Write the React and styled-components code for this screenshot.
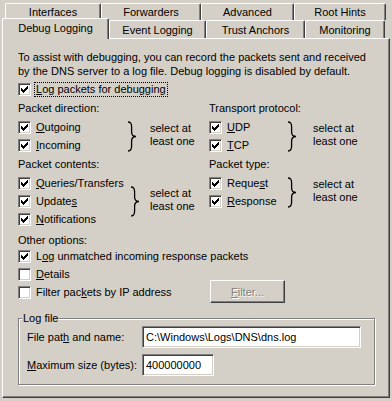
import React from 'react';
import styled, { createGlobalStyle } from 'styled-components';

const GlobalStyle = createGlobalStyle`
  html, body {
    margin: 0;
    padding: 0;
    background: #d4d0c8;
  }
  body {
    font-family: "Liberation Sans", Arial, sans-serif;
    font-size: 11px;
    color: #000;
  }
`;

const Dialog = styled.div`
  width: 392px;
  height: 401px;
  box-sizing: border-box;
  padding: 3px 2px 0 2px;
  background: #d4d0c8;
`;

const TabRow = styled.div`
  display: flex;
  height: ${p => p.h}px;
  padding-left: ${p => p.indent || 0}px;
`;

const Tab = styled.div`
  position: relative;
  width: ${p => p.w}px;
  height: ${p => (p.active ? 21 : p.h)}px;
  margin-top: ${p => (p.active ? -2 : 0)}px;
  z-index: ${p => (p.active ? 2 : 0)};
  box-sizing: border-box;
  background: #d4d0c8;
  border-left: 1px solid #fff;
  border-top: 1px solid #fff;
  border-right: 1px solid #404040;
  border-radius: 2px 2px 0 0;
  box-shadow: inset -1px 0 0 #808080;
  display: flex;
  align-items: center;
  justify-content: center;
  padding-bottom: ${p => (p.active ? 3 : 0)}px;
  white-space: nowrap;
`;

const Panel = styled.div`
  width: 388px;
  height: 360px;
  box-sizing: border-box;
  border: 1px solid;
  border-color: #fff #404040 #404040 #fff;
  box-shadow: inset -1px -1px 0 #808080;
  padding: 11px 13px 0 15px;
`;

const Intro = styled.p`
  margin: 0;
  line-height: 14px;
`;

const Heading = styled.div`
  line-height: 14px;
  margin-top: ${p => p.mt ?? 3}px;
  margin-bottom: ${p => p.mb ?? 3}px;
`;

const CheckRow = styled.div`
  display: flex;
  align-items: center;
  height: 18px;
  gap: 5px;
  margin-top: ${p => p.mt || 0}px;
`;

const Label = styled.span`
  line-height: 13px;
  white-space: nowrap;
  padding: 0 1px;
  margin-left: -1px;
  outline: ${p => (p.focused ? '1px dotted #000' : 'none')};
`;

const Key = styled.u`
  text-decoration: underline;
  text-underline-offset: 1px;
`;

const BoxFrame = styled.span`
  width: 13px;
  height: 13px;
  flex: none;
  box-sizing: border-box;
  background: #fff;
  border: 1px solid;
  border-color: #808080 #fff #fff #808080;
  box-shadow: inset 1px 1px 0 #404040, inset -1px -1px 0 #d4d0c8;
  display: flex;
  align-items: center;
  justify-content: center;
`;

// classic 7x7 check mark, one 3px column per x
const checkPath = [2, 3, 4, 3, 2, 1, 0]
  .map((r, c) => `M${c} ${r}h1v3h-1z`)
  .join(' ');

function CheckBox({ checked }) {
  return (
    <BoxFrame>
      {checked && (
        <svg width="7" height="7" viewBox="0 0 7 7" shapeRendering="crispEdges">
          <path d={checkPath} fill="#000" />
        </svg>
      )}
    </BoxFrame>
  );
}

function Option({ checked, children, focused, mt }) {
  return (
    <CheckRow mt={mt}>
      <CheckBox checked={checked} />
      <Label focused={focused}>{children}</Label>
    </CheckRow>
  );
}

const Columns = styled.div`
  display: grid;
  grid-template-columns: 191px 1fr;
`;

const Choice = styled.div`
  display: flex;
  align-items: center;
`;

const ChoiceList = styled.div`
  width: ${p => p.w}px;
  flex: none;
  display: flex;
  flex-direction: column;
`;

const Brace = styled.svg`
  flex: none;
  margin-right: ${p => p.gap}px;
`;

const Hint = styled.div`
  line-height: 13px;
  margin-top: -3px;
`;

function SelectGroup({ w, gap, children }) {
  return (
    <Choice>
      <ChoiceList w={w}>{children}</ChoiceList>
      <Brace width="10" height="31" viewBox="0 0 10 31" gap={gap}>
        <path
          d="M1 1 C4 1 4.6 3 4.6 6 L4.6 11 C4.6 14 6 15.5 9 15.5 C6 15.5 4.6 17 4.6 20 L4.6 25 C4.6 28 4 30 1 30"
          fill="none"
          stroke="#000"
          strokeWidth="1.3"
        />
      </Brace>
      <Hint>
        select at
        <br />
        least one
      </Hint>
    </Choice>
  );
}

const FilterRow = styled.div`
  display: grid;
  grid-template-columns: 191px 1fr;
  grid-template-rows: 18px;
  align-items: center;
`;

const Button = styled.button`
  width: 75px;
  height: 23px;
  margin: -3px 0 -2px 1px;
  box-sizing: border-box;
  background: #d4d0c8;
  border: 1px solid;
  border-color: #fff #404040 #404040 #fff;
  box-shadow: inset -1px -1px 0 #808080;
  font: inherit;
  color: #808080;
  text-shadow: 1px 1px 0 #fff;
  padding: 0;
`;

const GroupBox = styled.div`
  position: relative;
  margin-top: 17px;
  width: 357px;
  height: 67px;
  box-sizing: border-box;
  border: 1px solid #808080;
  box-shadow: inset 1px 1px 0 #fff, 1px 1px 0 #fff;
  padding: 7px 13px 0 8px;
`;

const Legend = styled.span`
  position: absolute;
  top: -8px;
  left: 3px;
  padding: 0 1px;
  background: #d4d0c8;
  line-height: 14px;
`;

const FieldGrid = styled.div`
  display: grid;
  grid-template-columns: 115px 1fr;
  row-gap: 6px;
  align-items: center;
`;

const TextInput = styled.div`
  height: 22px;
  width: ${p => (p.w ? `${p.w}px` : 'auto')};
  box-sizing: border-box;
  background: #fff;
  border: 1px solid;
  border-color: #808080 #fff #fff #808080;
  box-shadow: inset 1px 1px 0 #404040, inset -1px -1px 0 #d4d0c8;
  padding: 0 3px;
  display: flex;
  align-items: center;
  white-space: nowrap;
`;

export default function App() {
  return (
    <>
      <GlobalStyle />
      <Dialog>
        <TabRow h={17} indent={3}>
          <Tab w={96} h={17}>Interfaces</Tab>
          <Tab w={100} h={17}>Forwarders</Tab>
          <Tab w={93} h={17}>Advanced</Tab>
          <Tab w={92} h={17}>Root Hints</Tab>
        </TabRow>
        <TabRow h={18}>
          <Tab w={107} active>Debug Logging</Tab>
          <Tab w={97} h={18}>Event Logging</Tab>
          <Tab w={99} h={18}>Trust Anchors</Tab>
          <Tab w={80} h={18}>Monitoring</Tab>
        </TabRow>
        <Panel>
          <Intro>
            To assist with debugging, you can record the packets sent and received
            <br />
            by the DNS server to a log file. Debug logging is disabled by default.
          </Intro>
          <Option checked focused mt={2}>
            <Key>L</Key>og packets for debugging
          </Option>

          <Columns>
            <div>
              <Heading>Packet direction:</Heading>
              <SelectGroup w={109} gap={13}>
                <Option checked><Key>O</Key>utgoing</Option>
                <Option checked><Key>I</Key>ncoming</Option>
              </SelectGroup>
            </div>
            <div>
              <Heading>Transport protocol:</Heading>
              <SelectGroup w={78} gap={16}>
                <Option checked><Key>U</Key>DP</Option>
                <Option checked><Key>T</Key>CP</Option>
              </SelectGroup>
            </div>
            <div>
              <Heading>Packet contents:</Heading>
              <SelectGroup w={112} gap={10}>
                <Option checked><Key>Q</Key>ueries/Transfers</Option>
                <Option checked>Update<Key>s</Key></Option>
                <Option checked><Key>N</Key>otifications</Option>
              </SelectGroup>
            </div>
            <div>
              <Heading>Packet type:</Heading>
              <SelectGroup w={78} gap={16}>
                <Option checked>Reque<Key>s</Key>t</Option>
                <Option checked><Key>R</Key>esponse</Option>
              </SelectGroup>
            </div>
          </Columns>

          <Heading mt={5} mb={0}>Other options:</Heading>
          <Option checked>L<Key>o</Key>g unmatched incoming response packets</Option>
          <Option><Key>D</Key>etails</Option>
          <FilterRow>
            <Option>Filter pac<Key>k</Key>ets by IP address</Option>
            <Button disabled>
              <Key>F</Key>ilter...
            </Button>
          </FilterRow>

          <GroupBox>
            <Legend>Log file</Legend>
            <FieldGrid>
              <span>File pat<Key>h</Key> and name:</span>
              <TextInput>C:\Windows\Logs\DNS\dns.log</TextInput>
              <span><Key>M</Key>aximum size (bytes):</span>
              <TextInput w={72}>400000000</TextInput>
            </FieldGrid>
          </GroupBox>
        </Panel>
      </Dialog>
    </>
  );
}
